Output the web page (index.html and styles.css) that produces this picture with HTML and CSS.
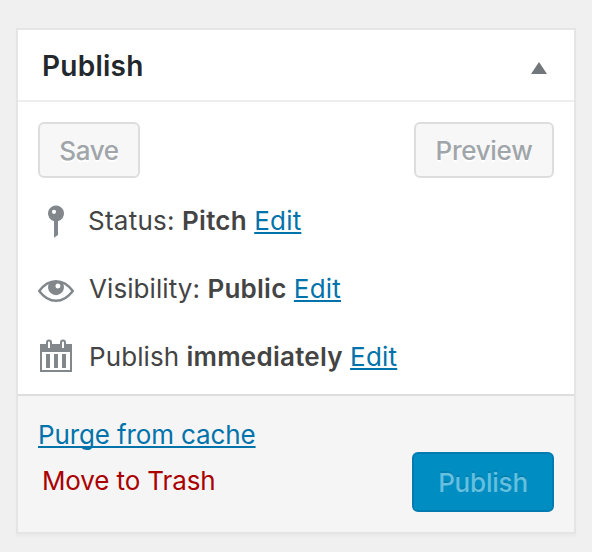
FILE: index.html
```
<!DOCTYPE html>
<html lang="en">
	<head>
		<meta charset="UTF-8">
		<title>Publish</title>
		<link rel="stylesheet" href="styles.css">
	</head>
	<body>
		<div class="postbox">
			<div class="header">
				<h2>Publish</h2>
				<svg class="toggle" width="16" height="12" viewBox="0 0 16 12"><path d="M8 0L16 12H0z"/></svg>
			</div>
			<div class="minor">
				<div class="actions">
					<button class="button save" disabled>Save</button>
					<button class="button preview" disabled>Preview</button>
				</div>
				<!-- status, visibility, date -->
				<div class="row status">
					<svg class="icon" width="36" height="40" viewBox="0 0 36 40">
						<path fill-rule="evenodd" d="M18 5.500a8 8 0 0 1 2 15.750V35L16 37.800V21.250A8 8 0 0 1 18 5.500zM16 9.700a2.100 2.100 0 1 0 0 4.200a2.100 2.100 0 0 0 0-4.200z"/>
					</svg>
					<p><span class="label">Status:</span> <b>Pitch</b> <a href="#">Edit</a></p>
				</div>
				<div class="row visibility">
					<svg class="icon" width="36" height="40" viewBox="0 0 36 40">
						<path class="line" d="M1.200 23Q8.500 13.200 18 13.200T34.800 23Q27.500 32.800 18 32.800T1.200 23z"/>
						<path fill-rule="evenodd" d="M11.500 14.500Q18 12 24.500 14.500A8 8 0 1 1 11.500 14.500zM20 15.500a2.500 2.500 0 1 0 0 5a2.500 2.500 0 0 0 0-5z"/>
					</svg>
					<p><span class="label">Visibility:</span> <b>Public</b> <a href="#">Edit</a></p>
				</div>
				<div class="row date">
					<svg class="icon" width="36" height="40" viewBox="0 0 36 40">
						<path fill-rule="evenodd" d="M2 8H34V36H2zM4 16V34H32V16z"/>
						<path class="ring" d="M9 12V6.500a2 2 0 0 1 4 0V12M23 12V6.500a2 2 0 0 1 4 0V12"/>
						<path class="gap" d="M10 7h2v5h-2zM24 7h2v5h-2z"/>
						<path d="M8 18h4v14H8zM16 18h4v14h-4zM24 18h4v14h-4z"/>
					</svg>
					<p><span class="label">Publish</span> <b>immediately</b> <a href="#">Edit</a></p>
				</div>
			</div>
			<div class="major">
				<div class="links">
					<a class="purge" href="#">Purge from cache</a>
					<a class="trash" href="#">Move to Trash</a>
				</div>
				<button class="button primary" disabled>Publish</button>
			</div>
		</div>
	</body>
</html>
```

FILE: styles.css
```
* {
	box-sizing: border-box;
	margin: 0;
	padding: 0;
}
body {
	background: #f0f0f0;
	color: #444;
	font: 26px/36px Inter, "Liberation Sans", sans-serif;
	padding: 28px 16px 18px;
}
.postbox {
	height: 506px;
	background: #fff;
	border: 2px solid #e5e5e5;
	box-shadow: 0 2px 2px rgba(0,0,0,.03);
	display: flex;
	flex-direction: column;
}
.header {
	height: 72px;
	border-bottom: 2px solid #eee;
	padding: 2px 27px 0 24px;
	display: flex;
	align-items: center;
	justify-content: space-between;
}
h2 {
	color: #23282d;
	font-size: 28px;
	font-weight: 600;
	letter-spacing: .25px;
}
.toggle {
	fill: #72777c;
	margin-top: 3px;
}
.minor {
	height: 292px;
	padding: 20px 20px 0;
}
.actions {
	display: flex;
	justify-content: space-between;
	margin-bottom: 22px;
}
.button {
	height: 56px;
	border: 2px solid #ddd;
	border-radius: 6px;
	background: #f7f7f7;
	color: #a0a5aa;
	font: 500 26px/50px Inter, "Liberation Sans", sans-serif;
	letter-spacing: -.3px;
	padding-top: 2px;
	text-shadow: 0 2px 0 #fff;
	text-align: center;
	white-space: nowrap;
}
.save {
	width: 102px;
}
.preview {
	width: 140px;
}
.row {
	height: 40px;
	margin-bottom: 28px;
	display: flex;
	align-items: center;
	white-space: nowrap;
}
.row p {
	padding-top: 2px;
}
.icon {
	fill: #82878c;
	margin-right: 15px;
}
.status .icon {
	margin-right: 14px;
}
.line, .ring {
	fill: none;
	stroke: #82878c;
	stroke-width: 2;
}
.line {
	stroke-width: 2.4;
}
.gap {
	fill: #fff;
}
b {
	font-weight: 600;
	letter-spacing: .25px;
}
.label {
	letter-spacing: .08px;
}
.status .label {
	letter-spacing: .25px;
}
a {
	color: #0073aa;
	text-decoration: underline;
	text-decoration-thickness: 2px;
	text-underline-offset: 2px;
	text-decoration-skip-ink: none;
}
.row a {
	letter-spacing: .2px;
}
.major {
	flex: 1;
	background: #f5f5f5;
	border-top: 2px solid #ddd;
	padding: 20px 20px;
	display: flex;
	justify-content: space-between;
	align-items: flex-end;
}
.links {
	align-self: flex-start;
	display: flex;
	flex-direction: column;
	align-items: flex-start;
	gap: 10px;
	padding-top: 1px;
	letter-spacing: -.12px;
}
.trash {
	color: #a00;
	text-decoration: none;
	margin-left: 4px;
}
.primary {
	width: 142px;
	height: 60px;
	background: #008ec2;
	border-color: #007cb2;
	color: #66bfdf;
	letter-spacing: -.2px;
	text-shadow: 0 -2px 0 rgba(0,0,0,.1);
}
```
